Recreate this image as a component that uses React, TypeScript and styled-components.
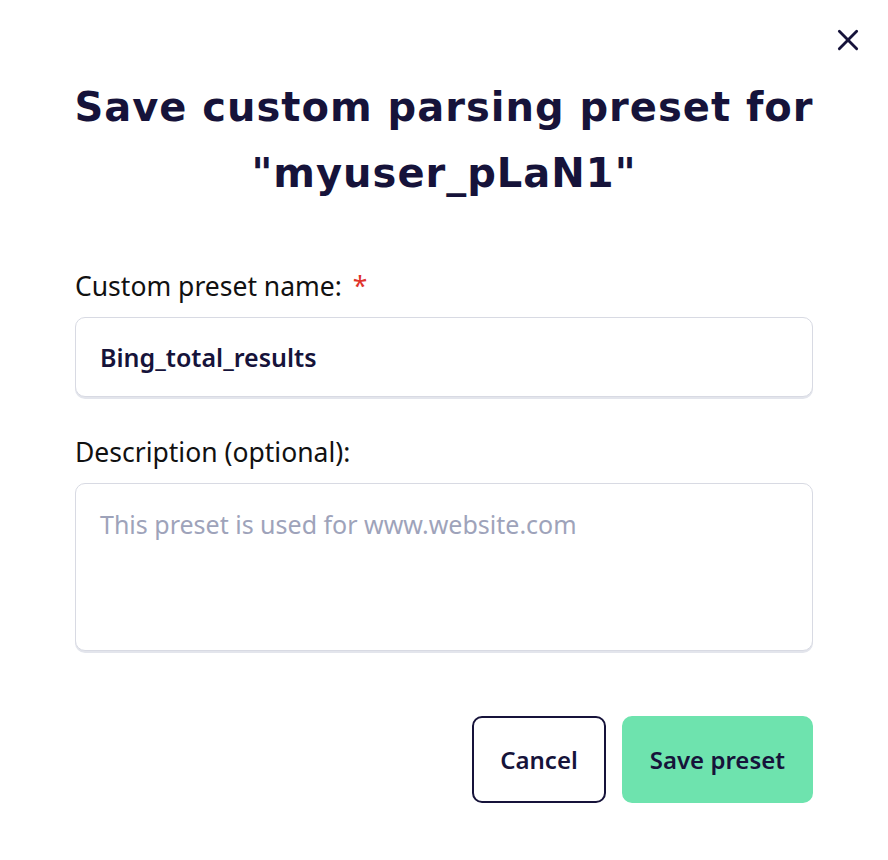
import React from 'react'
import styled, { createGlobalStyle } from 'styled-components'

const Global = createGlobalStyle`
  html, body { margin:0; padding:0; background:#fff; }
  body { font-family:"Noto Sans", "Open Sans", sans-serif; color:#16133a; }
  * { box-sizing:border-box; }
`

export default function App(){
  return <>
    <Global />
    <Dialog>
      <Close aria-label="Close">
        <svg width="26" height="26" viewBox="0 0 24 24" fill="none" stroke="#16133a" strokeWidth="2.6" strokeLinecap="round">
          <path d="M4 4L20 20M20 4L4 20" />
        </svg>
      </Close>
      <Title>Save custom parsing preset for<br />"myuser_pLaN1"</Title>
      <Field>
        <Label>Custom preset name: <Req>*</Req></Label>
        <Input defaultValue="Bing_total_results" />
      </Field>
      <Field>
        <Label>Description (optional):</Label>
        <TextArea placeholder="This preset is used for www.website.com" />
      </Field>
      <Actions>
        <Button>Cancel</Button>
        <Button primary>Save preset</Button>
      </Actions>
    </Dialog>
  </>
}

const Dialog = styled.div`
  position:relative;
  width:888px;
  min-height:860px;
  padding:74px 75px 40px;
  display:flex;
  flex-direction:column;
`
const Close = styled.button`
  position:absolute;
  top:27px;
  right:27px;
  background:none;
  border:none;
  padding:0;
  cursor:pointer;
  display:flex;
`
const Title = styled.h1`
  margin:0 -20px 64px;
  text-align:center;
  white-space:nowrap;
  font-family:"DejaVu Sans", "Noto Sans", sans-serif;
  font-size:40px;
  line-height:66px;
  font-weight:700;
  letter-spacing:1px;
  color:#16133a;
`
const Field = styled.div`
  display:flex;
  flex-direction:column;
  margin-bottom:39px;
`
const Label = styled.label`
  font-size:26.5px;
  line-height:32px;
  color:#111;
  margin-bottom:15px;
`
const Req = styled.span`
  color:#e0332b;
  margin-left:4px;
`
const Input = styled.input`
  height:80px;
  border:1.5px solid #d8dae3;
  border-radius:10px;
  box-shadow:0 2px 0 #e3e5ec;
  padding:0 24px;
  font-family:inherit;
  font-size:25px;
  font-weight:600;
  color:#16133a;
  outline:none;
`
const TextArea = styled.textarea`
  height:168px;
  border:1.5px solid #d8dae3;
  border-radius:10px;
  box-shadow:0 2px 0 #e3e5ec;
  padding:24px 24px;
  font-family:inherit;
  font-size:25px;
  line-height:32px;
  color:#16133a;
  resize:none;
  outline:none;
  &::placeholder { color:#9ea3ba; }
`
const Actions = styled.div`
  display:flex;
  justify-content:flex-end;
  gap:16px;
  margin-top:26px;
`
const Button = styled.button<{ primary?: boolean }>`
  height:87px;
  padding:0 26px;
  border-radius:10px;
  font-family:inherit;
  font-size:24px;
  font-weight:600;
  color:#16133a;
  cursor:pointer;
  border:${p => p.primary ? '2px solid #6ee3ae' : '2px solid #16133a'};
  background:${p => p.primary ? '#6ee3ae' : '#fff'};
`
